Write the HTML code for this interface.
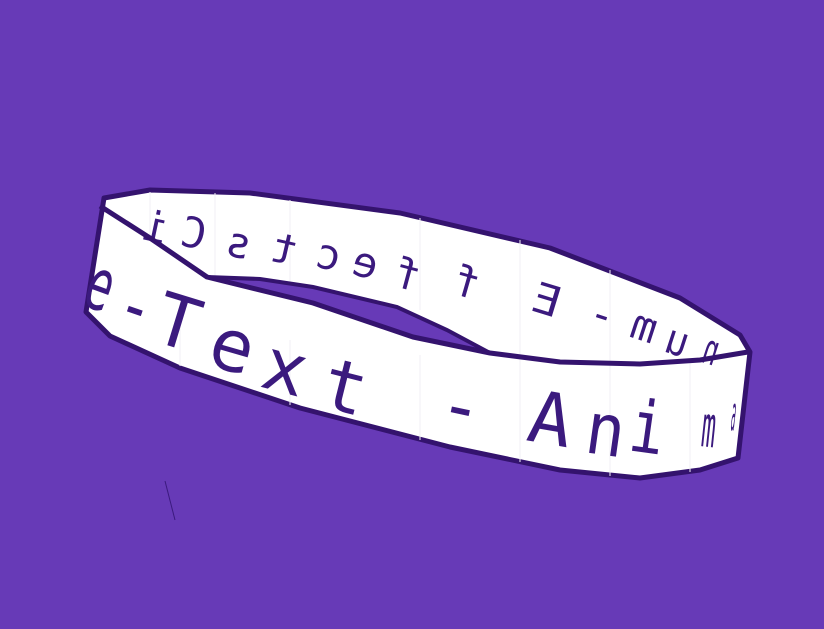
<!DOCTYPE html>
<html><head><meta charset="utf-8"><style>
html,body{margin:0;padding:0;background:#673ab7;width:824px;height:629px;overflow:hidden}
svg{display:block}
text{font-family:"DejaVu Sans Mono","Liberation Mono",monospace;fill:#3b1a7e}
</style></head><body>
<svg width="824" height="629" viewBox="0 0 824 629">
<rect width="824" height="629" fill="#673ab7"/>
<path d="M104,198 L150,190 L250,193 L400,213 L550,248 L680,298 L740,335 L750,352 L738,458 L700,470 L640,478 L560,470 L450,447 L300,408 L180,368 L110,336 L86,312 Z" fill="#ffffff" stroke="#34136e" stroke-width="5" stroke-linejoin="round"/>
<g stroke="#f1eff5" stroke-width="1">
<line x1="150" y1="192" x2="150" y2="238"/><line x1="215" y1="193" x2="215" y2="278"/><line x1="290" y1="200" x2="290" y2="282"/>
<line x1="420" y1="218" x2="420" y2="310"/><line x1="520" y1="240" x2="520" y2="356"/><line x1="610" y1="270" x2="610" y2="362"/>
<line x1="180" y1="320" x2="180" y2="366"/><line x1="290" y1="340" x2="290" y2="405"/><line x1="420" y1="355" x2="420" y2="440"/>
<line x1="520" y1="358" x2="520" y2="462"/><line x1="610" y1="363" x2="610" y2="476"/><line x1="690" y1="360" x2="690" y2="472"/>
</g>
<g font-size="42">
<text transform="translate(165,244) rotate(12) scale(-1,1)">i</text>
<text transform="translate(203,250) rotate(12) scale(-1,1)">C</text>
<text transform="translate(248,260) rotate(13) scale(-1,1)">s</text>
<text transform="translate(293,266) rotate(13) scale(-1,1)">t</text>
<text transform="translate(338,272) rotate(14) scale(-1,1)">c</text>
<text transform="translate(374,280) rotate(15) scale(-1,1)">e</text>
<text transform="translate(416,292) rotate(15) scale(-1,1)">f</text>
<text transform="translate(475,300) rotate(16) scale(-1,1)">f</text>
<text transform="translate(556,318) rotate(17) scale(-1.1,1)">E</text>
<text transform="translate(610,332) rotate(18) scale(-1,1)">-</text>
<text transform="translate(652,344) rotate(18) scale(-1,1)">m</text>
<text transform="translate(684,358) rotate(18) scale(-0.9,1)">u</text>
<text transform="translate(714,366) rotate(18) scale(-0.6,1)">n</text>
</g>
<path d="M207,277 L260,279 L313,287 L397,307 L447,330 L490,353 L413,337 L313,303 Z" fill="#673ab7"/>
<path d="M100,206 L150,238 L207,277 L313,303 L413,337 L490,353 L560,362 L640,364 L700,360 L748,352" fill="none" stroke="#34136e" stroke-width="5" stroke-linejoin="round"/>
<path d="M207,277 L260,279 L313,287 L397,307 L447,330 L490,353" fill="none" stroke="#34136e" stroke-width="4"/>
<g font-size="72">
<text transform="translate(80,304) rotate(20) scale(0.6,1)">e</text>
<text transform="translate(112,324) rotate(19) scale(0.8,1)">-</text>
<text transform="translate(150,340) rotate(17)">T</text>
<text transform="translate(205,364) rotate(16)">e</text>
<text transform="translate(258,386) rotate(15)">x</text>
<text transform="translate(318,406) rotate(14)">t</text>
<text transform="translate(435,426) rotate(12)">-</text>
<text transform="translate(525,440) rotate(10)">A</text>
<text transform="translate(583,452) rotate(8) scale(0.9,1)">n</text>
<text transform="translate(627,450) rotate(8) scale(0.8,1)">i</text>
<text transform="translate(700,446) rotate(6) scale(0.4,1)" font-size="58">m</text>
<text transform="translate(730,430) rotate(6) scale(0.15,1)" font-size="48">a</text>
</g>
<line x1="165" y1="481" x2="175" y2="520" stroke="#3b1a7e" stroke-width="1"/>
</svg>
</body></html>
